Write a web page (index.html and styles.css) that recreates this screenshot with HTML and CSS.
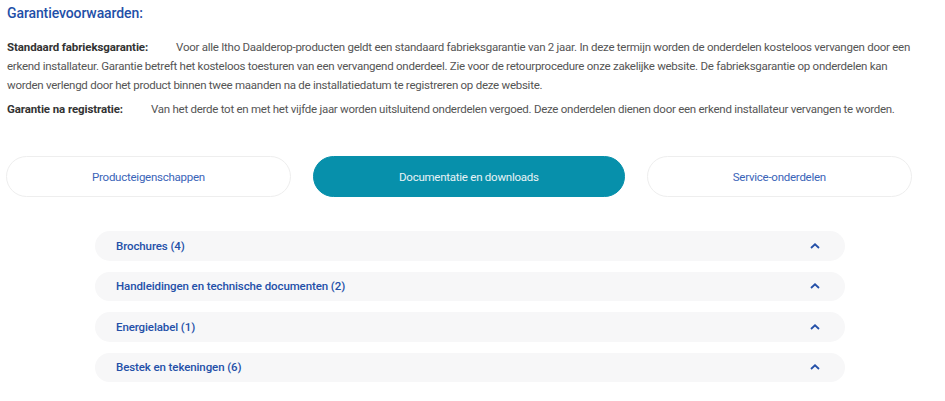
FILE: index.html
```html
<!DOCTYPE html>
<html lang="nl">
<head>
<meta charset="utf-8">
<link rel="stylesheet" href="styles.css">
</head>
<body>
<div class="page">
  <h2 class="title">Garantievoorwaarden:</h2>
  <p class="terms"><strong class="label">Standaard fabrieksgarantie:</strong>Voor alle Itho Daalderop-producten geldt een standaard fabrieksgarantie van 2 jaar. In deze termijn worden de onderdelen kosteloos vervangen door een erkend installateur. Garantie betreft het kosteloos toesturen van een vervangend onderdeel. Zie voor de retourprocedure onze zakelijke website. De fabrieksgarantie op onderdelen kan worden verlengd door het product binnen twee maanden na de installatiedatum te registreren op deze website.</p>
  <p class="terms second"><strong class="label">Garantie na registratie:</strong>Van het derde tot en met het vijfde jaar worden uitsluitend onderdelen vergoed. Deze onderdelen dienen door een erkend installateur vervangen te worden.</p>

  <div class="tabs">
    <button class="tab">Producteigenschappen</button>
    <button class="tab active">Documentatie en downloads</button>
    <button class="tab">Service-onderdelen</button>
  </div>

  <div class="accordion">
    <div class="acc-row"><span class="acc-title">Brochures (4)</span><svg class="chev" viewBox="0 0 10 6" width="10" height="6"><path d="M1 5 L5 1.3 L9 5" fill="none" stroke="#2450a8" stroke-width="1.8"/></svg></div>
    <div class="acc-row"><span class="acc-title">Handleidingen en technische documenten (2)</span><svg class="chev" viewBox="0 0 10 6" width="10" height="6"><path d="M1 5 L5 1.3 L9 5" fill="none" stroke="#2450a8" stroke-width="1.8"/></svg></div>
    <div class="acc-row"><span class="acc-title">Energielabel (1)</span><svg class="chev" viewBox="0 0 10 6" width="10" height="6"><path d="M1 5 L5 1.3 L9 5" fill="none" stroke="#2450a8" stroke-width="1.8"/></svg></div>
    <div class="acc-row"><span class="acc-title">Bestek en tekeningen (6)</span><svg class="chev" viewBox="0 0 10 6" width="10" height="6"><path d="M1 5 L5 1.3 L9 5" fill="none" stroke="#2450a8" stroke-width="1.8"/></svg></div>
  </div>
</div>
</body>
</html>
```
FILE: styles.css
```css
* { box-sizing: border-box; }
html, body { margin: 0; padding: 0; background: #fff; }
body {
  font-family: Roboto, "Liberation Sans", sans-serif;
  color: #555;
}
.page {
  width: 945px;
  padding: 0 28px 0 7px;
}
.title {
  margin: 0;
  padding-top: 4px;
  font-size: 14px;
  font-weight: 500;
  line-height: 18px;
  color: #1f50a8;
  letter-spacing: -0.1px;
}
.terms {
  margin: 16px 0 0;
  font-size: 11.5px;
  line-height: 19px;
  color: #555;
  letter-spacing: -0.26px;
}
.terms.second { margin-top: 5px; }
.label {
  font-weight: 700;
  color: #333;
  margin-right: 28px;
  letter-spacing: -0.1px;
}
.tabs {
  display: flex;
  gap: 22px;
  margin-top: 37px;
  width: 906px;
  margin-left: -1px;
}
.tab {
  flex: 1 1 auto;
  height: 41px;
  border: 1px solid #eeeeee;
  border-radius: 21px;
  background: #fff;
  font-family: inherit;
  font-size: 11.5px;
  color: #3a64b8;
  padding: 0;
  letter-spacing: -0.25px;
}
.tab.active {
  background: #0790ab;
  border-color: #0790ab;
  color: #e8f3f6;
}
.accordion {
  margin: 34px 0 0 88px;
  width: 750px;
  display: flex;
  flex-direction: column;
  gap: 11px;
}
.acc-row {
  height: 29.5px;
  border-radius: 15px;
  background: #f7f7f8;
  display: flex;
  align-items: center;
  justify-content: space-between;
  padding: 0 25px 0 21px;
}
.acc-title {
  font-size: 11.5px;
  font-weight: 500;
  color: #2450a8;
  letter-spacing: -0.1px;
}
.chev { display: block; }
```
